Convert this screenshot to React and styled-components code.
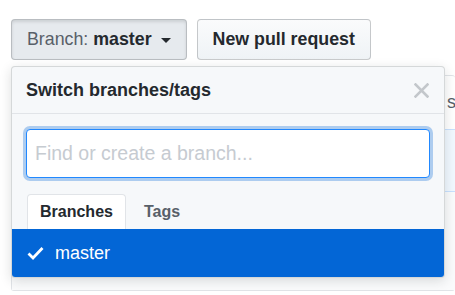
import React from 'react'
import styled, { createGlobalStyle } from 'styled-components';

const GlobalStyle = createGlobalStyle`
  html, body {
    margin: 0;
    padding: 0;
    background: #fff;
    font-family: "Liberation Sans", Arial, sans-serif;
    color: #24292e;
    overflow: hidden;
  }
`;

const Page = styled.div`
  padding: 19px 0 0 11px;
  position: relative;
`;

const Toolbar = styled.div`
  display: flex;
  gap: 10px;
`;

const Button = styled.button`
  display: flex;
  align-items: center;
  gap: 9px;
  height: 41px;
  padding: 0 15px;
  border: 1px solid rgba(27, 31, 35, 0.22);
  border-radius: 4px;
  font-family: inherit;
  font-size: 17.8px;
  font-weight: bold;
  color: #24292e;
  background: ${props => props.active ? '#e6eaee' : 'linear-gradient(#fafbfc, #eff3f6)'};
  box-shadow: ${props => props.active ? 'inset 0 2px 3px rgba(27,31,35,0.12)' : 'none'};
`;

const Muted = styled.span`
  font-weight: normal;
  color: #586069;
`;

const Caret = styled.span`
  width: 0;
  height: 0;
  margin-top: 2px;
  border-left: 5px solid transparent;
  border-right: 5px solid transparent;
  border-top: 5px solid #24292e;
`;

const BgBox = styled.div`
  margin-top: 15px;
  border: 1px solid #e1e4e8;
  border-radius: 3px;
  border-right: none;
`;

const BgRow = styled.div`
  height: 53px;
  display: flex;
  align-items: center;
  padding-left: 435px;
  font-size: 18px;
  color: #586069;
  white-space: nowrap;
`;

const Gold = styled.span`
  color: #b08800;
`;

const BgBand = styled.div`
  height: 61px;
  background: #f1f8ff;
  border-top: 1px solid #c8e1ff;
  border-bottom: 1px solid #c8e1ff;
`;

const BgList = styled.div`
  height: 98px;
  background: #fafbfc;
`;

const Menu = styled.div`
  position: absolute;
  top: 66px;
  left: 11px;
  width: 434px;
  height: 212px;
  box-sizing: border-box;
  background: #f6f8fa;
  border: 1px solid rgba(27, 31, 35, 0.15);
  border-radius: 4px;
  box-shadow: 0 3px 12px rgba(27, 31, 35, 0.15);
  overflow: hidden;
  display: flex;
  flex-direction: column;
`;

const Header = styled.div`
  height: 46px;
  display: flex;
  align-items: center;
  justify-content: space-between;
  padding: 0 15px 0 14px;
  border-bottom: 1px solid #e1e4e8;
  font-size: 18px;
  font-weight: bold;
`;

const Filter = styled.div`
  padding: 15px 14px 16px;
`;

const Input = styled.div`
  height: 49px;
  box-sizing: border-box;
  display: flex;
  align-items: center;
  padding: 0 8px;
  background: #fff;
  border: 1px solid #2188ff;
  border-radius: 4px;
  box-shadow: 0 0 0 3px rgba(3, 102, 214, 0.3);
  font-size: 19.5px;
  color: #c6cbd1;
`;

const Tabs = styled.div`
  display: flex;
  gap: 5px;
  padding-left: 15px;
`;

const Tab = styled.div`
  height: 34px;
  display: flex;
  align-items: center;
  padding: 0 12px;
  font-size: 16px;
  font-weight: bold;
  color: ${props => props.selected ? '#24292e' : '#586069'};
  background: ${props => props.selected ? '#fff' : 'transparent'};
  border: 1px solid ${props => props.selected ? '#e1e4e8' : 'transparent'};
  border-bottom: none;
  border-radius: 4px 4px 0 0;
`;

const Item = styled.div`
  flex: 1;
  display: flex;
  align-items: center;
  gap: 11px;
  padding-left: 15px;
  background: #0366d6;
  color: #fff;
  font-size: 18px;
`;

const App = () => {
  return (
    <>
      <GlobalStyle />
      <Page>
        <Toolbar>
          <Button active>
            <span><Muted>Branch: </Muted>master</span>
            <Caret />
          </Button>
          <Button>New pull request</Button>
        </Toolbar>
        <BgBox>
          <BgRow>s<Gold>t</Gold></BgRow>
          <BgBand />
          <BgList />
        </BgBox>
        <Menu>
          <Header>
            Switch branches/tags
            <svg width="15" height="15" viewBox="0 0 15 15">
              <path d="M1.5 1.5l12 12M13.5 1.5l-12 12" stroke="#c3c7cb" strokeWidth="2.6" strokeLinecap="square" />
            </svg>
          </Header>
          <Filter>
            <Input>Find or create a branch...</Input>
          </Filter>
          <Tabs>
            <Tab selected>Branches</Tab>
            <Tab>Tags</Tab>
          </Tabs>
          <Item>
            <svg width="17" height="14" viewBox="0 0 17 14">
              <path d="M1.5 7.5l4.5 4.5L15.5 2" fill="none" stroke="#fff" strokeWidth="2.8" />
            </svg>
            master
          </Item>
        </Menu>
      </Page>
    </>
  );
}

export default App
